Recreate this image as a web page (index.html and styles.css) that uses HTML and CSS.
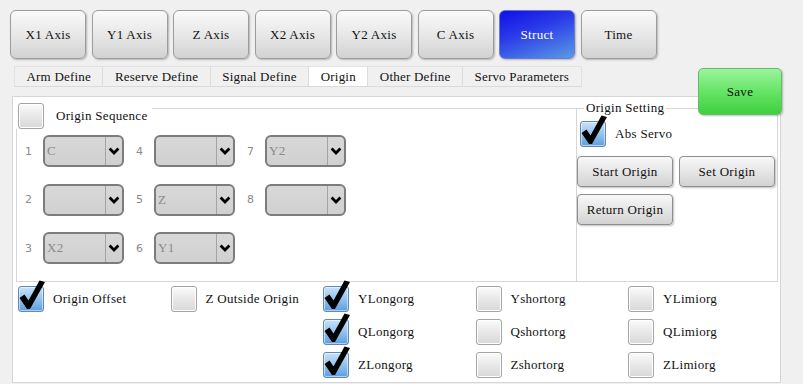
FILE: index.html
```html
<!DOCTYPE html>
<html>
<head>
<meta charset="utf-8">
<link rel="stylesheet" href="styles.css">
</head>
<body>
<div class="topbar">
  <button class="axis">X1 Axis</button>
  <button class="axis">Y1 Axis</button>
  <button class="axis">Z Axis</button>
  <button class="axis">X2 Axis</button>
  <button class="axis">Y2 Axis</button>
  <button class="axis">C Axis</button>
  <button class="axis active">Struct</button>
  <button class="axis">Time</button>
</div>
<div class="tabs">
  <div class="tab">Arm Define</div>
  <div class="tab">Reserve Define</div>
  <div class="tab">Signal Define</div>
  <div class="tab selected">Origin</div>
  <div class="tab">Other Define</div>
  <div class="tab">Servo Parameters</div>
</div>
<button class="save">Save</button>
<div class="panel">
  <div class="groups">
    <div class="seq">
      <div class="seq-title"><span class="cb"></span><span class="lbl">Origin Sequence</span></div>
      <div class="combos">
        <div class="cell"><span class="num">1</span><div class="combo"><span class="val">C</span><span class="arrow"><svg width="12" height="8" viewBox="0 0 12 8"><polyline points="1.6,1.6 6,6 10.4,1.6" fill="none" stroke="#000" stroke-width="2.8"/></svg></span></div></div>
        <div class="cell"><span class="num">2</span><div class="combo"><span class="val"></span><span class="arrow"><svg width="12" height="8" viewBox="0 0 12 8"><polyline points="1.6,1.6 6,6 10.4,1.6" fill="none" stroke="#000" stroke-width="2.8"/></svg></span></div></div>
        <div class="cell"><span class="num">3</span><div class="combo"><span class="val">X2</span><span class="arrow"><svg width="12" height="8" viewBox="0 0 12 8"><polyline points="1.6,1.6 6,6 10.4,1.6" fill="none" stroke="#000" stroke-width="2.8"/></svg></span></div></div>
        <div class="cell"><span class="num">4</span><div class="combo"><span class="val"></span><span class="arrow"><svg width="12" height="8" viewBox="0 0 12 8"><polyline points="1.6,1.6 6,6 10.4,1.6" fill="none" stroke="#000" stroke-width="2.8"/></svg></span></div></div>
        <div class="cell"><span class="num">5</span><div class="combo"><span class="val">Z</span><span class="arrow"><svg width="12" height="8" viewBox="0 0 12 8"><polyline points="1.6,1.6 6,6 10.4,1.6" fill="none" stroke="#000" stroke-width="2.8"/></svg></span></div></div>
        <div class="cell"><span class="num">6</span><div class="combo"><span class="val">Y1</span><span class="arrow"><svg width="12" height="8" viewBox="0 0 12 8"><polyline points="1.6,1.6 6,6 10.4,1.6" fill="none" stroke="#000" stroke-width="2.8"/></svg></span></div></div>
        <div class="cell"><span class="num">7</span><div class="combo"><span class="val">Y2</span><span class="arrow"><svg width="12" height="8" viewBox="0 0 12 8"><polyline points="1.6,1.6 6,6 10.4,1.6" fill="none" stroke="#000" stroke-width="2.8"/></svg></span></div></div>
        <div class="cell"><span class="num">8</span><div class="combo"><span class="val"></span><span class="arrow"><svg width="12" height="8" viewBox="0 0 12 8"><polyline points="1.6,1.6 6,6 10.4,1.6" fill="none" stroke="#000" stroke-width="2.8"/></svg></span></div></div>
      </div>
    </div>
    <div class="setting">
      <div class="set-title">Origin Setting</div>
      <div class="abs">
        <span class="cb checked"><svg class="tick" width="28" height="33" viewBox="0 -7 28 33"><path d="M1.5,12 L6.5,8.5 L10.5,14.5 L21.5,-5.5 L27,-4 L12,23 L9,23 Z" fill="#000"/></svg></span>
        <span class="lbl">Abs Servo</span>
      </div>
      <div class="btns">
        <button class="btn">Start Origin</button>
        <button class="btn">Set Origin</button>
        <button class="btn">Return Origin</button>
      </div>
    </div>
  </div>
  <div class="opts">
    <div class="opt"><span class="cb checked"><svg class="tick" width="28" height="33" viewBox="0 -7 28 33"><path d="M1.5,12 L6.5,8.5 L10.5,14.5 L21.5,-5.5 L27,-4 L12,23 L9,23 Z" fill="#000"/></svg></span><span class="lbl">Origin Offset</span></div>
    <div class="opt"><span class="cb"></span><span class="lbl">Z Outside Origin</span></div>
    <div class="opt"><span class="cb checked"><svg class="tick" width="28" height="33" viewBox="0 -7 28 33"><path d="M1.5,12 L6.5,8.5 L10.5,14.5 L21.5,-5.5 L27,-4 L12,23 L9,23 Z" fill="#000"/></svg></span><span class="lbl">YLongorg</span></div>
    <div class="opt"><span class="cb"></span><span class="lbl">Yshortorg</span></div>
    <div class="opt"><span class="cb"></span><span class="lbl">YLimiorg</span></div>

    <div class="opt"></div>
    <div class="opt"></div>
    <div class="opt"><span class="cb checked"><svg class="tick" width="28" height="33" viewBox="0 -7 28 33"><path d="M1.5,12 L6.5,8.5 L10.5,14.5 L21.5,-5.5 L27,-4 L12,23 L9,23 Z" fill="#000"/></svg></span><span class="lbl">QLongorg</span></div>
    <div class="opt"><span class="cb"></span><span class="lbl">Qshortorg</span></div>
    <div class="opt"><span class="cb"></span><span class="lbl">QLimiorg</span></div>

    <div class="opt"></div>
    <div class="opt"></div>
    <div class="opt"><span class="cb checked"><svg class="tick" width="28" height="33" viewBox="0 -7 28 33"><path d="M1.5,12 L6.5,8.5 L10.5,14.5 L21.5,-5.5 L27,-4 L12,23 L9,23 Z" fill="#000"/></svg></span><span class="lbl">ZLongorg</span></div>
    <div class="opt"><span class="cb"></span><span class="lbl">Zshortorg</span></div>
    <div class="opt"><span class="cb"></span><span class="lbl">ZLimiorg</span></div>
  </div>
</div>
</body>
</html>
```
FILE: styles.css
```css
* { box-sizing: border-box; }
html, body { margin: 0; padding: 0; }
body {
  background: #f0f0f0;
  width: 803px;
  height: 384px;
  overflow: hidden;
  position: relative;
  font-family: "Liberation Serif", serif;
  font-size: 13px;
  letter-spacing: 0.3px;
  color: #111;
  padding: 10px 0 0 10px;
}
button {
  font-family: inherit;
  font-size: inherit;
  letter-spacing: inherit;
  color: #111;
  padding: 0;
  margin: 0;
  cursor: default;
}

.topbar {
  display: flex;
  gap: 5.5px;
  height: 49px;
}
.axis {
  width: 76px;
  height: 49px;
  border: 1px solid #9c9c9c;
  border-radius: 6px;
  background: linear-gradient(#fafafa, #e6e6e6 55%, #d2d2d2);
  box-shadow: 1px 1px 2px rgba(0,0,0,0.25);
}
.axis.active {
  background: linear-gradient(160deg, #1010e8 0%, #2a3ae8 40%, #5a9ae6 100%);
  border-color: #6a7ad0;
  color: #fff;
}

.tabs {
  display: flex;
  margin: 7px 0 0 4px;
  height: 21px;
  width: max-content;
  border: 1px solid #e2e2e2;
  border-bottom-color: #dadada;
  letter-spacing: 0.2px;
}
.tab {
  display: flex;
  align-items: center;
  padding: 0 11.5px;
  border-right: 1px solid #dcdcdc;
  background: #f0f0f0;
}
.tab:last-child { border-right: none; }
.tab.selected { background: #fff; }

.save {
  position: absolute;
  left: 698px;
  top: 68px;
  width: 84px;
  height: 47px;
  border: 1px solid #6cb86c;
  border-radius: 5px;
  background: linear-gradient(#9af59a, #66e466 50%, #3fcf3f);
  box-shadow: 1px 1px 2px rgba(0,0,0,0.25);
  z-index: 2;
}

.panel {
  margin: 9px 0 0 2px;
  width: 769px;
  height: 287px;
  background: #fff;
  border: 1px solid #d6d6d6;
}

.groups {
  margin: 11px 0 0 3px;
  width: 762px;
  height: 174px;
  border: 1px solid #d6d6d6;
  display: flex;
}
.seq {
  position: relative;
  width: 560px;
  border-right: 1px solid #d6d6d6;
  padding: 26px 0 0 8px;
}
.seq-title {
  position: absolute;
  left: -2px;
  top: -7px;
  display: flex;
  align-items: center;
  gap: 12px;
  background: #fff;
  padding: 0 4px 0 3px;
  height: 27px;
}
.combos {
  display: grid;
  grid-template-columns: repeat(3, 99px);
  grid-template-rows: repeat(3, 32px);
  grid-auto-flow: column;
  column-gap: 12px;
  row-gap: 16.5px;
}
.cell {
  display: flex;
  align-items: center;
}
.num {
  width: 18px;
  font-family: "DejaVu Sans", sans-serif;
  font-size: 11px;
  letter-spacing: 0;
  color: #8a8a8a;
}
.combo {
  width: 81px;
  height: 32px;
  border: 2px solid #7c7c7c;
  border-radius: 6px;
  background: linear-gradient(#d8d8d8, #d0d0d0);
  display: flex;
}
.val {
  flex: 1;
  display: flex;
  align-items: center;
  padding-left: 2px;
  color: #8a8a8a;
}
.arrow {
  width: 17px;
  border-left: 1px solid #a4a4a4;
  display: flex;
  align-items: center;
  justify-content: center;
}

.setting {
  position: relative;
  flex: 1;
}
.set-title {
  position: absolute;
  left: 7px;
  top: -8px;
  background: #fff;
  padding: 0 2px;
  line-height: 14px;
}
.abs {
  display: flex;
  align-items: center;
  gap: 9px;
  margin: 12px 0 0 3px;
}
.btns {
  display: grid;
  grid-template-columns: 96px 96px;
  gap: 7px 6px;
  margin-top: 9px;
}
.btn {
  height: 31px;
  border: 1px solid #8e8e8e;
  border-radius: 4px;
  background: linear-gradient(#f8f8f8, #e4e4e4 55%, #d2d2d2);
  box-shadow: 1px 1px 2px rgba(0,0,0,0.25);
}

.cb {
  position: relative;
  display: inline-block;
  flex: none;
  width: 26px;
  height: 26px;
  border: 1px solid #a4a4a4;
  border-radius: 3px;
  background: linear-gradient(#fbfbfb, #e8e8e8 50%, #d8d8d8);
  box-shadow: inset 0 0 0 1px #fff;
}
.cb.checked {
  border-color: #5f8ab8;
  background: linear-gradient(#c8e2f8, #94c2ee 50%, #5c9ee0);
  box-shadow: inset 0 0 0 1px rgba(255,255,255,0.5);
}
.tick {
  position: absolute;
  left: -1px;
  top: -8px;
  overflow: visible;
}

.opts {
  display: grid;
  grid-template-columns: repeat(5, 152.5px);
  grid-template-rows: repeat(3, 33px);
  margin: 0 0 0 5px;
}
.opt {
  display: flex;
  align-items: center;
  gap: 9px;
}
```
